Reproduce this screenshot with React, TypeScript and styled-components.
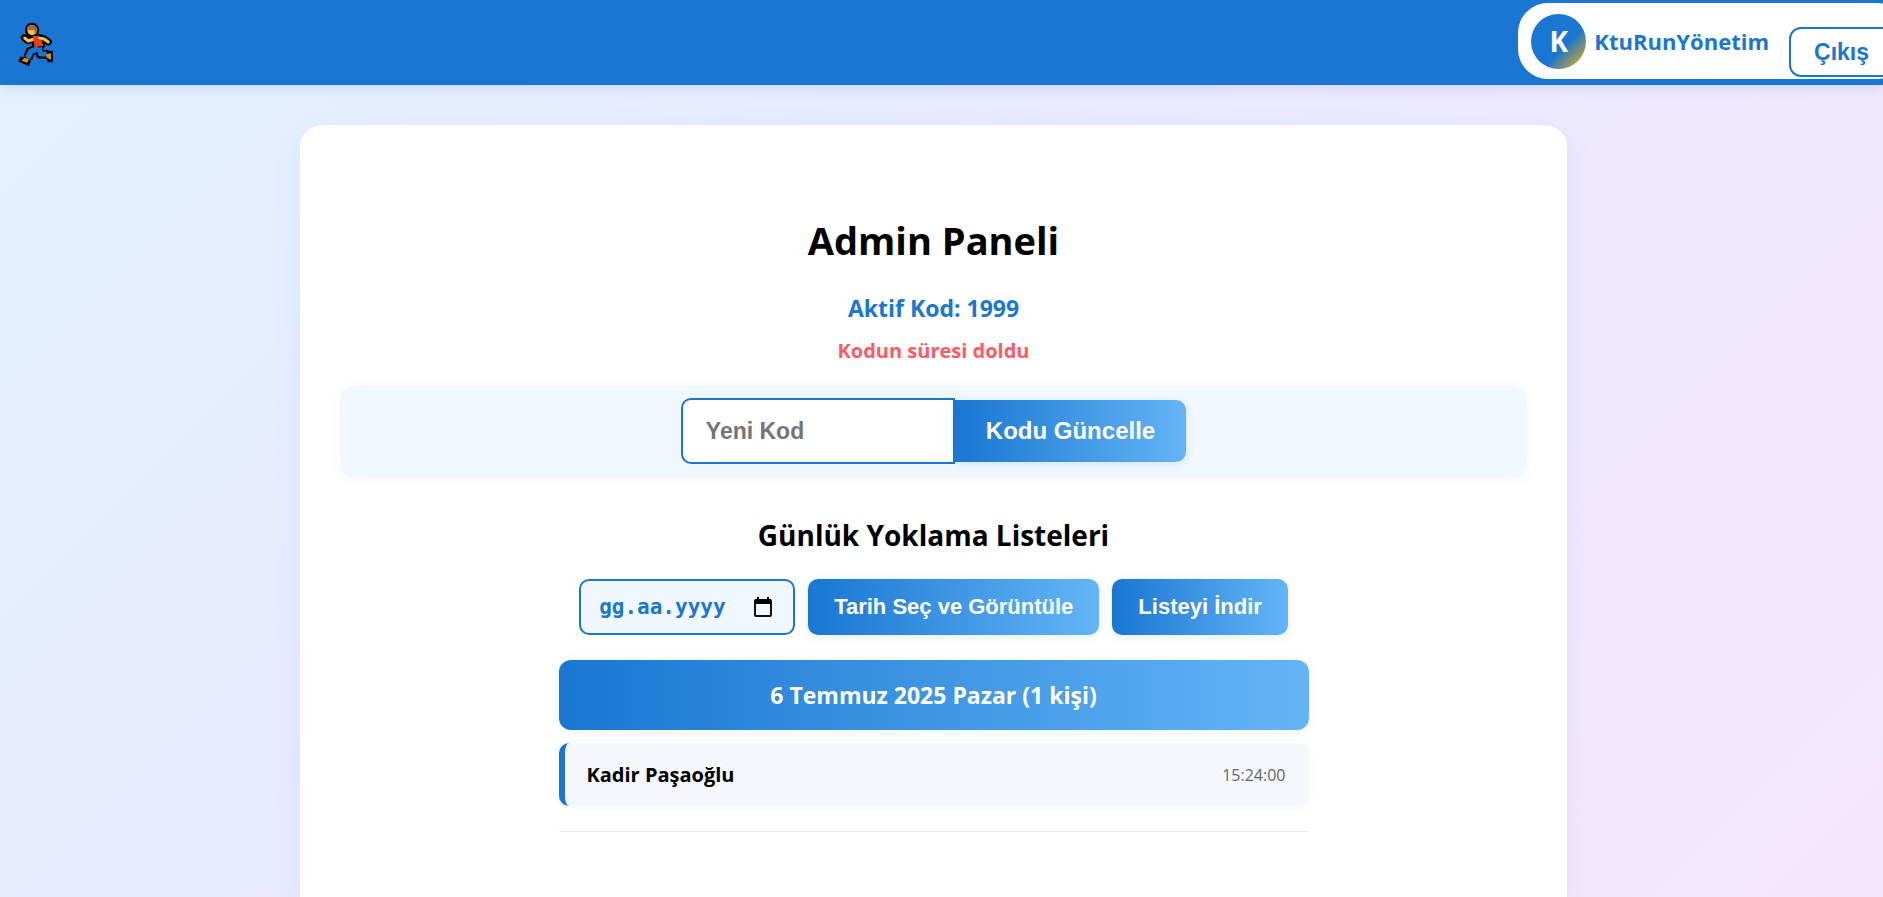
import React from "react";
import styled, { createGlobalStyle } from "styled-components";

const blue = "#1976d2";
const fade = "linear-gradient(90deg, #1976d2 0%, #64b5f6 100%)";
const arial = '"Liberation Sans", Arial, sans-serif';

const GlobalStyle = createGlobalStyle`
  * { box-sizing: border-box; }
  html { min-height: 100%; }
  body {
    margin: 0;
    font-family: "Segoe UI", "Open Sans", "Noto Sans", sans-serif;
    color: #000;
  }
`;

const Page = styled.div`
  min-height: 100vh;
  display: flex;
  flex-direction: column;
  overflow-x: hidden;
  background: linear-gradient(135deg, #e3f2ff 0%, #e8eaff 38%, #f5e6ff 100%);
`;

const Header = styled.header`
  display: flex;
  align-items: center;
  justify-content: space-between;
  height: 85px;
  padding: 0 0 3px 18px;
  background: ${blue};
  box-shadow: 0 2px 12px rgba(25, 60, 140, 0.14);
`;

const LogoLink = styled.a`
  display: flex;
  padding-top: 6px;
`;

const UserPill = styled.div`
  display: flex;
  align-items: center;
  height: 76px;
  margin-right: -25px;
  padding: 0 14px 0 13px;
  background: #fff;
  border-radius: 30px;
`;

const Avatar = styled.span`
  display: grid;
  place-items: center;
  width: 55px;
  height: 55px;
  border-radius: 50%;
  background: linear-gradient(135deg, #1976d2 60%, #ffb300 100%);
  color: #fff;
  font-size: 28px;
  font-weight: 700;
`;

const UserName = styled.span`
  margin: 0 20px 0 8px;
  color: ${blue};
  font-size: 22px;
  font-weight: 700;
`;

const LogoutButton = styled.button`
  align-self: flex-end;
  height: 50px;
  margin-bottom: 2px;
  padding: 0 23px;
  border: 2px solid ${blue};
  border-radius: 12px;
  background: #fff;
  color: ${blue};
  font: 700 23px ${arial};
`;

const Card = styled.main`
  flex: 1;
  width: calc(100% - 32px);
  max-width: 1267px;
  margin: 40px auto 0;
  padding: 91px 40px 64px;
  border-radius: 22px 22px 0 0;
  background: #fff;
  box-shadow: 0 8px 32px rgba(25, 118, 210, 0.07);
`;

const Body = styled.div`
  flex: 1;
  display: flex;
  padding-right: 16px;
`;

const Title = styled.h1`
  margin: 0;
  font-size: 38px;
  line-height: 48px;
  text-align: center;
`;

const ActiveCode = styled.p`
  margin: 28px 0 0;
  color: ${blue};
  font-size: 23px;
  font-weight: 700;
  line-height: 32px;
  text-align: center;
`;

const Expired = styled.p`
  margin: 13px 0 0;
  color: #ff5a64;
  font-size: 20px;
  font-weight: 700;
  line-height: 28px;
  text-align: center;
`;

const CodeForm = styled.form`
  display: flex;
  align-items: center;
  justify-content: center;
  margin-top: 21px;
  padding: 12px 0 13px;
  border-radius: 14px;
  background: #f0f7ff;
  box-shadow: 0 2px 12px rgba(25, 118, 210, 0.06);
`;

const CodeInput = styled.input`
  width: 274px;
  height: 66px;
  padding: 0 23px;
  border: 2px solid ${blue};
  border-radius: 10px 0 0 10px;
  background: #fff;
  color: #222;
  font: 700 23px ${arial};
  &::placeholder { color: #757575; opacity: 1; }
`;

const GradientButton = styled.button<{ $size?: "large" }>`
  height: ${(p) => (p.$size ? 62 : 56)}px;
  padding: 0 ${(p) => (p.$size ? 31 : 26)}px;
  border: 0;
  border-radius: ${(p) => (p.$size ? "0 10px 10px 0" : "10px")};
  background: ${fade};
  box-shadow: 0 2px 8px rgba(25, 118, 210, 0.13);
  color: #fff;
  font: 700 ${(p) => (p.$size ? 24 : 22)}px ${arial};
  white-space: nowrap;
`;

const Subtitle = styled.h2`
  margin: 38px 0 0;
  font-size: 28px;
  line-height: 40px;
  text-align: center;
`;

const Toolbar = styled.div`
  display: flex;
  flex-wrap: wrap;
  justify-content: center;
  gap: 13px;
  margin-top: 24px;
`;

const DateField = styled.label`
  display: flex;
  align-items: center;
  justify-content: space-between;
  width: 216px;
  height: 56px;
  padding: 0 21px 0 18px;
  border: 2px solid ${blue};
  border-radius: 10px;
  background: #f0f7ff;
`;

const DateInput = styled.input`
  width: 132px;
  padding: 0;
  border: 0;
  outline: 0;
  background: transparent;
  color: ${blue};
  font: 700 21px Consolas, "DejaVu Sans Mono", monospace;
  &::placeholder { color: ${blue}; opacity: 1; }
`;

const DayList = styled.section`
  max-width: 750px;
  margin: 25px auto 0;
  border-bottom: 1px solid #ececec;
  padding-bottom: 25px;
`;

const DayHeading = styled.h3`
  margin: 0 0 13px;
  border-radius: 12px;
  background: ${fade};
  box-shadow: 0 2px 12px rgba(25, 118, 210, 0.08);
  color: #fff;
  font-size: 23px;
  line-height: 70px;
  text-align: center;
`;

const People = styled.ul`
  margin: 0;
  padding: 0;
  list-style: none;
`;

const Person = styled.li`
  display: flex;
  align-items: center;
  justify-content: space-between;
  height: 63px;
  padding: 0 23px 0 22px;
  border-left: 6px solid ${blue};
  border-radius: 10px;
  background: #f4f8fc;
  box-shadow: 0 1px 6px rgba(25, 118, 210, 0.06);
`;

const PersonName = styled.span`
  font-size: 20px;
  font-weight: 700;
`;

const Time = styled.time`
  color: #666;
  font-size: 16px;
`;

const Runner = () => (
  <svg width="36" height="44" viewBox="54 66 108 132" aria-hidden="true">
    <g fill="none" stroke="#000" strokeLinecap="round" strokeLinejoin="round">
      <circle cx="96" cy="90" r="14" fill="#000" strokeWidth="15" />
      <path d="M101 114L84 122L73 113" strokeWidth="21" />
      <path d="M118 113L133 117L145 126" strokeWidth="21" />
      <path d="M98 110H122L129 137L104 141Z" fill="#000" strokeWidth="14" />
      <path d="M110 147L90 155L83 176" strokeWidth="28" strokeLinecap="butt" />
      <path d="M116 144L121 163H145" strokeWidth="26" strokeLinecap="butt" />
      <path d="M66 180L82 187" strokeWidth="17" strokeLinecap="square" />
      <path d="M150 161V178" strokeWidth="17" strokeLinecap="square" />
    </g>
    <g fill="none" strokeLinecap="round" strokeLinejoin="round">
      <path d="M103 117L85 123L74 114" stroke="#fcc43c" strokeWidth="9" />
      <path d="M116 114L132 117L145 126" stroke="#fcc43c" strokeWidth="9" />
      <path d="M114 146L93 154L83 174" stroke="#1976d2" strokeWidth="17" strokeLinecap="butt" />
      <path d="M118 142L121 162H140" stroke="#1976d2" strokeWidth="15" strokeLinecap="butt" />
    </g>
    <circle cx="96" cy="91" r="14" fill="#fcc43c" />
    <path d="M81 91C79 78 88 74 96 74C107 74 114 83 112 93C111 99 108 103 105 105L103 91Z" fill="#a56a43" />
    <path d="M98 108H113V119H124L130 138L104 141Z" fill="#f03a17" />
    <path d="M64 182L73 174L87 176L82 188Z" fill="#d9930b" />
    <path d="M139 162L153 160V180L139 172Z" fill="#d9930b" />
  </svg>
);

const CalendarIcon = () => (
  <svg width="18" height="20" viewBox="0 0 18 20" aria-hidden="true">
    <path d="M4 0V3M14 0V3" stroke="#000" strokeWidth="2" />
    <rect x="1" y="3" width="16" height="16" rx="1" fill="none" stroke="#111" strokeWidth="2" />
    <path d="M1 2H17V7H1Z" fill="#000" />
  </svg>
);

const people = [{ name: "Kadir Paşaoğlu", time: "15:24:00" }];

export default function App() {
  return (
    <Page>
      <GlobalStyle />
      <Header>
        <LogoLink href="#" aria-label="KtuRun">
          <Runner />
        </LogoLink>
        <UserPill>
          <Avatar>K</Avatar>
          <UserName>KtuRunYönetim</UserName>
          <LogoutButton type="button">Çıkış</LogoutButton>
        </UserPill>
      </Header>
      <Body>
        <Card>
          <Title>Admin Paneli</Title>
          <ActiveCode>Aktif Kod: 1999</ActiveCode>
          <Expired>Kodun süresi doldu</Expired>
          <CodeForm onSubmit={(e) => e.preventDefault()}>
            <CodeInput type="text" placeholder="Yeni Kod" aria-label="Yeni Kod" />
            <GradientButton type="submit" $size="large">Kodu Güncelle</GradientButton>
          </CodeForm>
          <Subtitle>Günlük Yoklama Listeleri</Subtitle>
          <Toolbar>
            <DateField>
              <DateInput type="text" placeholder="gg.aa.yyyy" aria-label="Tarih" />
              <CalendarIcon />
            </DateField>
            <GradientButton type="button">Tarih Seç ve Görüntüle</GradientButton>
            <GradientButton type="button">Listeyi İndir</GradientButton>
          </Toolbar>
          <DayList>
            <DayHeading>6 Temmuz 2025 Pazar (1 kişi)</DayHeading>
            <People>
              {people.map((p) => (
                <Person key={p.name}>
                  <PersonName>{p.name}</PersonName>
                  <Time>{p.time}</Time>
                </Person>
              ))}
            </People>
          </DayList>
        </Card>
      </Body>
    </Page>
  );
}
